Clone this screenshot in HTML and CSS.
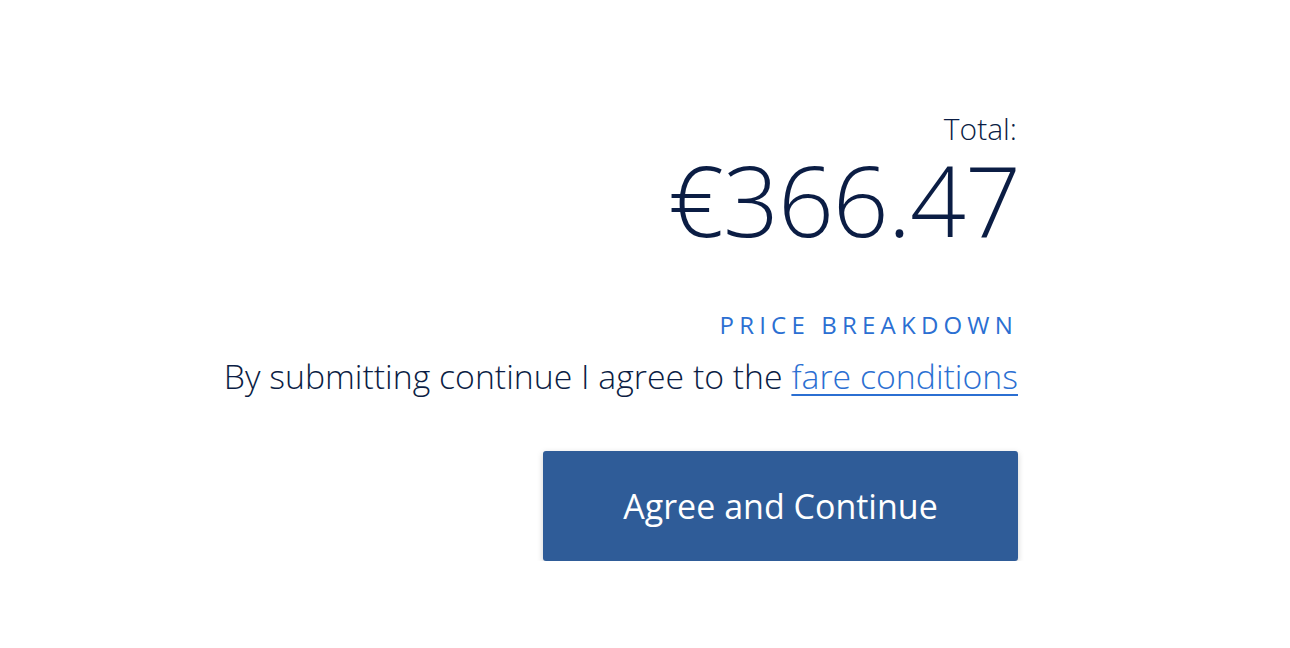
FILE: index.html
```html
<!DOCTYPE html>
<html>
<head>
<meta charset="utf-8">
<link rel="stylesheet" href="styles.css">
</head>
<body>
<div class="summary">
  <div class="total-label">Total:</div>
  <div class="total-amount">€366.47</div>
  <a class="breakdown" href="#">PRICE BREAKDOWN</a>
  <p class="terms">By submitting continue I agree to the <a href="#">fare conditions</a></p>
  <button class="cta">Agree and Continue</button>
</div>
</body>
</html>
```
FILE: styles.css
```css
html, body {
  margin: 0;
  background: #fff;
}
body {
  font-family: "Open Sans", "Liberation Sans", sans-serif;
  color: #0b1d44;
}
.summary {
  width: 1018px;
  display: flex;
  flex-direction: column;
  align-items: flex-end;
  padding-top: 109px;
}
.total-label {
  font-size: 30px;
  font-weight: 300;
  line-height: 40px;
  margin-right: 1px;
}
.total-amount {
  font-size: 98px;
  font-weight: 300;
  line-height: 100px;
  letter-spacing: -1px;
  margin-right: -2px;
}
.breakdown {
  margin-top: 60px;
  font-size: 24px;
  font-weight: 400;
  letter-spacing: 5.2px;
  color: #2b6fd2;
  text-decoration: none;
  line-height: 32px;
  margin-right: 0;
}
.terms {
  margin: 12px 0 0;
  font-size: 33.8px;
  font-weight: 300;
  line-height: 46px;
}
.terms a {
  color: #2b6fd2;
  text-decoration: underline;
  text-underline-offset: 5px;
  text-decoration-thickness: 2px;
}
.cta {
  margin-top: 52px;
  width: 475px;
  height: 110px;
  border: none;
  border-radius: 3px;
  background: #2f5c98;
  color: #fff;
  font-family: "Open Sans", "Liberation Sans", sans-serif;
  font-size: 34px;
  font-weight: 400;
  box-shadow: 0 2px 6px rgba(0, 0, 0, 0.18);
  cursor: pointer;
}
```
